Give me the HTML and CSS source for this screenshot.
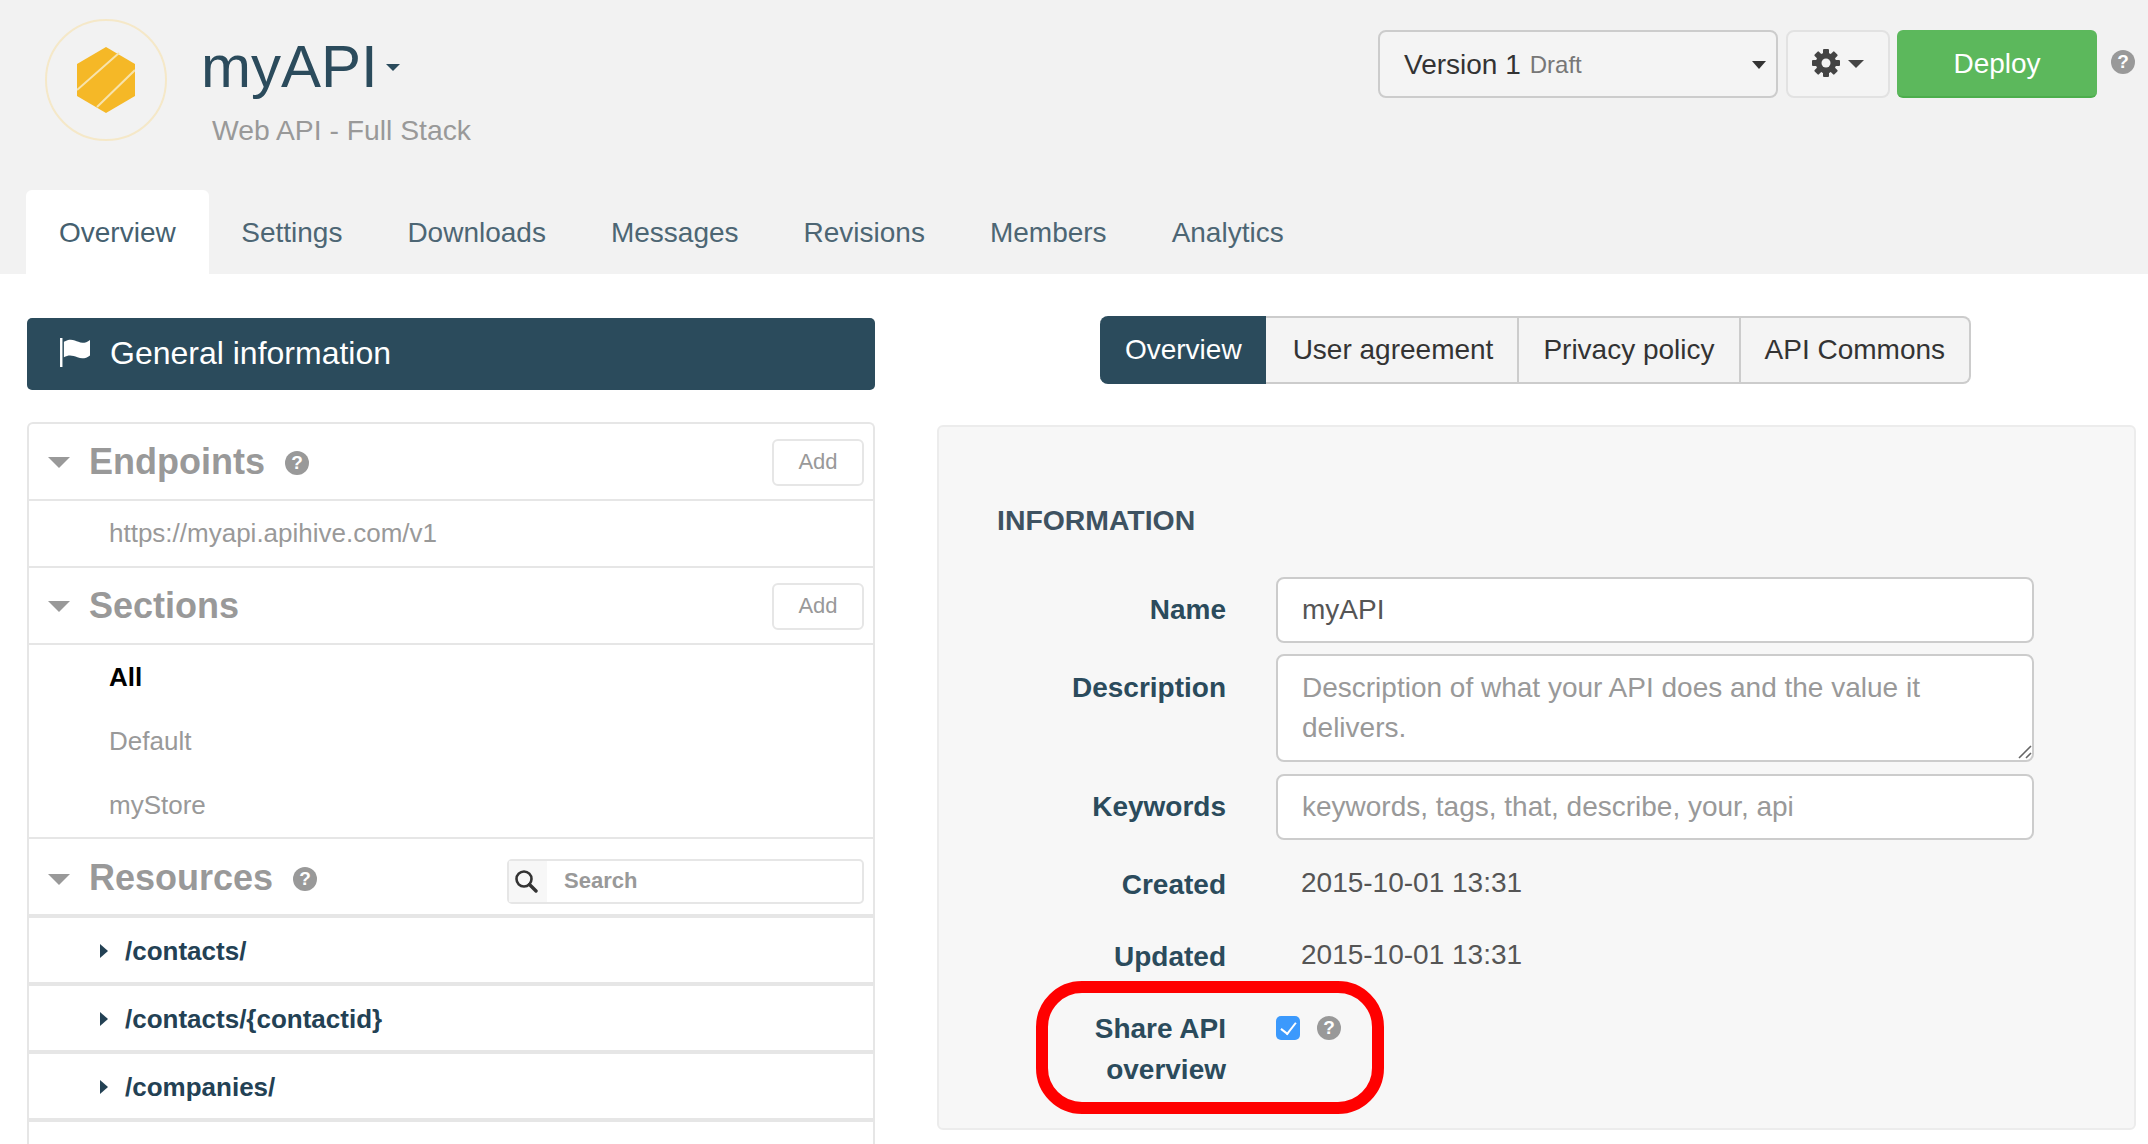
FILE: index.html
```html
<!DOCTYPE html>
<html lang="en">
<head>
<meta charset="utf-8">
<title>myAPI</title>
<link rel="stylesheet" href="styles.css">
</head>
<body>
<header class="header">
  <div class="top">
    <div class="logo">
      <svg class="hex" viewBox="0 0 58 66">
        <polygon points="29,0 58,17 58,49 29,66 0,49 0,17" fill="#f5b827"/>
        <path d="M0 43 L42 6 M20 60 L58 23" stroke="#f7e3ac" stroke-width="2" fill="none"/>
      </svg>
    </div>
    <div class="brand">
      <div class="title-line"><span class="title">myAPI</span><span class="caret title-caret"></span></div>
      <div class="subtitle">Web API - Full Stack</div>
    </div>
    <div class="actions">
      <div class="version"><span>Version 1</span><span class="draft">Draft</span><span class="caret version-caret"></span></div>
      <div class="gear-btn">
        <svg class="gear" viewBox="0 0 28 28">
          <g fill="#444">
            <rect x="11" y="0" width="6" height="28" rx="1"/>
            <rect x="11" y="0" width="6" height="28" rx="1" transform="rotate(45 14 14)"/>
            <rect x="11" y="0" width="6" height="28" rx="1" transform="rotate(90 14 14)"/>
            <rect x="11" y="0" width="6" height="28" rx="1" transform="rotate(135 14 14)"/>
          </g>
          <circle cx="14" cy="14" r="7.5" fill="none" stroke="#444" stroke-width="5.5"/>
          <circle cx="14" cy="14" r="4.5" fill="#f2f2f2"/>
        </svg>
        <span class="caret gear-caret"></span>
      </div>
      <div class="deploy">Deploy</div>
      <span class="help help-top">?</span>
    </div>
  </div>
  <nav class="tabs">
    <a class="tab active">Overview</a>
    <a class="tab">Settings</a>
    <a class="tab">Downloads</a>
    <a class="tab">Messages</a>
    <a class="tab">Revisions</a>
    <a class="tab">Members</a>
    <a class="tab">Analytics</a>
  </nav>
</header>

<main class="main">
  <section class="left">
    <div class="bar">
      <svg class="flag" viewBox="0 0 32 30">
        <rect x="0" y="0" width="2.5" height="30" fill="#fff"/>
        <path d="M4 4 C10 0 15 2 19 4 C23 6 27 5 31 2 L31 18 C27 21 23 22 18 20 C13 18 9 17 4 20 Z" fill="#fff"/>
      </svg>
      <span>General information</span>
    </div>
    <div class="tree">
      <div class="tree-head">
        <span class="tri"></span><h2>Endpoints</h2><span class="help help-head">?</span>
        <span class="add">Add</span>
      </div>
      <div class="endpoint">https://myapi.apihive.com/v1</div>
      <div class="tree-head">
        <span class="tri"></span><h2>Sections</h2>
        <span class="add">Add</span>
      </div>
      <ul class="sections">
        <li class="current">All</li>
        <li>Default</li>
        <li>myStore</li>
      </ul>
      <div class="tree-head res-head">
        <span class="tri"></span><h2>Resources</h2><span class="help help-head">?</span>
        <div class="search">
          <span class="search-icon">
            <svg viewBox="0 0 24 24"><circle cx="10" cy="10" r="7.5" fill="none" stroke="#333" stroke-width="2.6"/><path d="M15.5 15.5 L22 22" stroke="#333" stroke-width="3.4" stroke-linecap="round"/></svg>
          </span>
          <span class="search-text">Search</span>
        </div>
      </div>
      <div class="res"><span class="res-arrow"></span>/contacts/</div>
      <div class="res"><span class="res-arrow"></span>/contacts/{contactid}</div>
      <div class="res"><span class="res-arrow"></span>/companies/</div>
      <div class="res res-empty"></div>
    </div>
  </section>

  <section class="right">
    <div class="subtabs">
      <a class="subtab on">Overview</a>
      <a class="subtab second">User agreement</a>
      <a class="subtab">Privacy policy</a>
      <a class="subtab">API Commons</a>
    </div>
    <div class="panel">
      <h3>INFORMATION</h3>
      <div class="row row-name">
        <label class="lbl lbl-mid">Name</label>
        <input class="field" type="text" value="myAPI">
      </div>
      <div class="row row-desc">
        <label class="lbl lbl-desc">Description</label>
        <textarea class="field area" placeholder="Description of what your API does and the value it delivers."></textarea>
        <svg class="grip" viewBox="0 0 14 14"><path d="M1 13 L13 1 M8 13 L13 8" stroke="#666" stroke-width="1.6" fill="none"/></svg>
      </div>
      <div class="row row-key">
        <label class="lbl lbl-mid">Keywords</label>
        <input class="field" type="text" placeholder="keywords, tags, that, describe, your, api">
      </div>
      <div class="row row-created">
        <span class="lbl lbl-text">Created</span>
        <span class="val">2015-10-01 13:31</span>
      </div>
      <div class="row row-updated">
        <span class="lbl lbl-text">Updated</span>
        <span class="val">2015-10-01 13:31</span>
      </div>
      <div class="row row-share">
        <span class="lbl lbl-text">Share API<br>overview</span>
        <div class="share-ctl">
          <input class="check" type="checkbox" checked>
          <span class="help help-share">?</span>
        </div>
        <div class="ring"></div>
      </div>
    </div>
  </section>
</main>
</body>
</html>
```

FILE: styles.css
```css
* { box-sizing: border-box; }
html, body { margin: 0; height: 1144px; overflow: hidden; background: #fff; }
body { font-family: "Liberation Sans", Arial, sans-serif; font-size: 28px; color: #555; }

/* header */
.header { height: 274px; background: #f2f2f2; display: flex; flex-direction: column; }
.top { height: 190px; display: flex; align-items: flex-start; padding-left: 45px; }
.logo { width: 122px; height: 122px; margin-top: 19px; border: 2px solid #f5e8c8; border-radius: 50%; display: flex; align-items: center; justify-content: center; flex: none; }
.hex { width: 58px; height: 66px; }
.brand { margin-left: 34px; }
.title-line { margin-top: 31px; height: 72px; display: flex; align-items: center; }
.title { font-size: 60px; line-height: 72px; color: #2b4b5c; }
.caret { display: inline-block; width: 0; height: 0; border-left: 7px solid transparent; border-right: 7px solid transparent; border-top: 7px solid #2b4b5c; }
.title-caret { margin-left: 8px; margin-top: 1px; }
.subtitle { margin-top: 9px; margin-left: 11px; line-height: 36px; font-size: 28.3px; color: #999; }
.actions { margin-left: auto; margin-top: 30px; display: flex; align-items: flex-start; padding-right: 13px; }
.version { width: 400px; height: 68px; background: #f4f4f4; border: 2px solid #ccc; border-radius: 8px; padding: 2px 0 0 24px; display: flex; align-items: center; color: #333; }
.draft { font-size: 24px; color: #777; margin-left: 9px; }
.version-caret { margin-left: auto; margin-right: 10px; border-top-color: #333; border-top-width: 8px; }
.gear-btn { width: 104px; height: 68px; margin-left: 8px; background: #f4f4f4; border: 2px solid #e2e2e2; border-radius: 8px; display: flex; align-items: center; padding-left: 24px; }
.gear { width: 28px; height: 28px; margin-top: -3px; }
.gear-caret { margin-left: 8px; border-left-width: 8px; border-right-width: 8px; border-top: 8px solid #444; }
.deploy { width: 200px; height: 68px; margin-left: 7px; padding-top: 2px; background: #5cb85c; border-bottom: 2px solid #4cae4c; border-radius: 6px; color: #fff; display: flex; align-items: center; justify-content: center; }
.help { display: inline-flex; align-items: center; justify-content: center; border-radius: 50%; background: #999; color: #fff; font-weight: 700; flex: none; }
.help-top { width: 24px; height: 24px; font-size: 19px; margin-left: 14px; margin-top: 20px; }

.tabs { height: 84px; display: flex; padding-left: 26px; }
.tab { padding: 1px 32.5px 0; line-height: 84px; color: #4d6674; }
.tab.active { background: #fff; border-radius: 6px 6px 0 0; padding: 1px 33px 0; color: #45606f; }

/* layout */
.main { display: grid; grid-template-columns: 848px 1199px; gap: 62px; padding: 42px 12px 0 27px; }

/* left */
.left { padding-top: 2px; }
.bar { height: 72px; background: #2b4b5c; border-radius: 5px; color: #fff; font-size: 32px; display: flex; align-items: center; padding: 0 0 1px 33px; }
.flag { width: 31px; height: 29px; margin-right: 19px; margin-top: -2px; }
.tree { margin-top: 32px; border: 2px solid #e6e6e6; border-bottom: 0; border-radius: 6px 6px 0 0; }
.tree-head { height: 77px; display: flex; align-items: center; padding: 0 9px 0 19px; border-bottom: 2px solid #e6e6e6; }
.tree-head h2 { margin: 0 0 0 19px; font-size: 36px; font-weight: 700; color: #999; }
.tri { width: 0; height: 0; border-left: 11px solid transparent; border-right: 11px solid transparent; border-top: 11px solid #999; margin-top: 2px; }
.help-head { width: 24px; height: 24px; font-size: 19px; margin-left: 20px; margin-top: 2px; }
.add { margin-left: auto; margin-top: 1px; width: 92px; height: 47px; border: 2px solid #e6e6e6; border-radius: 6px; color: #999; font-size: 22px; display: flex; align-items: center; justify-content: center; }
.endpoint { height: 67px; padding-left: 80px; line-height: 64px; font-size: 26px; color: #999; border-bottom: 2px solid #e6e6e6; }
.sections { list-style: none; margin: 0; padding: 0; border-bottom: 2px solid #e6e6e6; }
.sections li { height: 64px; line-height: 64px; padding-left: 80px; font-size: 26px; color: #999; }
.sections .current { color: #000; font-weight: 700; }
.res-head { height: 79px; padding-top: 3px; border-bottom-width: 4px; }
.search { margin-left: auto; width: 357px; height: 45px; border: 2px solid #e6e6e6; border-radius: 5px; display: flex; align-items: center; margin-top: 6px; }
.search-icon { width: 38px; height: 41px; padding-right: 4px; background: #f7f7f7; display: flex; align-items: center; justify-content: center; flex: none; }
.search-icon svg { width: 24px; height: 24px; flex: none; }
.search-text { margin-left: 17px; font-size: 22px; font-weight: 700; color: #999; }
.res { height: 68px; display: flex; align-items: center; padding: 2px 0 0 71px; border-bottom: 4px solid #e6e6e6; font-size: 26px; font-weight: 700; color: #234154; }
.res-arrow { width: 0; height: 0; border-top: 7px solid transparent; border-bottom: 7px solid transparent; border-left: 8px solid #234154; margin-right: 17px; }
.res-empty { border-bottom: 0; }

/* right */
.subtabs { display: flex; justify-content: center; height: 68px; padding-right: 2px; }
.subtab { height: 68px; line-height: 64px; padding: 0 24px; background: #f4f4f4; border: 2px solid #ccc; border-left-width: 0; color: #333; }
.subtab:last-child { border-radius: 0 8px 8px 0; }
.subtab.on { background: #2b4b5c; border-color: #2b4b5c; color: #fff; border-radius: 8px 0 0 8px; padding: 0 22px 0 25px; }
.subtab.second { padding-left: 27px; }
.panel { margin-top: 41px; height: 705px; background: #f7f7f7; border: 2px solid #ececec; border-radius: 6px; padding-top: 73px; }
.panel h3 { margin: 0 0 37px 58px; font-size: 28.4px; line-height: 40px; font-weight: 700; color: #3e5261; }
.row { display: flex; gap: 50px; }
.lbl { width: 287px; text-align: right; font-weight: 700; color: #2b4b5c; line-height: 40px; flex: none; }
.lbl-mid { line-height: 66px; }
.lbl-desc { line-height: 68px; }
.lbl-text { line-height: 41px; padding-top: 1px; }
.field { width: 758px; height: 66px; padding: 0 24px; border: 2px solid #ccc; border-radius: 8px; background: #fff; font: 28px/40px "Liberation Sans", Arial, sans-serif; color: #555; outline: none; }
.field::placeholder { color: #999; opacity: 1; }
.area { height: 108px; padding-top: 12px; padding-bottom: 12px; line-height: 40px; resize: none; display: block; }
.row-desc { margin-top: 11px; position: relative; }
.grip { position: absolute; left: 1079px; top: 91px; width: 14px; height: 14px; }
.row-key { margin-top: 12px; }
.row-created { margin-top: 23px; }
.row-updated { margin-top: 30px; }
.row-share { margin-top: 30px; position: relative; }
.val { margin-left: 25px; color: #555; line-height: 39px; }
.share-ctl { display: flex; align-items: center; gap: 17px; height: 42px; }
.check { appearance: none; width: 24px; height: 24px; margin: 0; background: #3b99fc; border-radius: 5px; position: relative; }
.check::after { content: ""; position: absolute; left: 8px; top: 3px; width: 7px; height: 13px; border: solid #fff; border-width: 0 2px 2px 0; transform: rotate(38deg); }
.help-share { width: 24px; height: 24px; font-size: 19px; }
.ring { position: absolute; left: 97px; top: -26px; width: 348px; height: 133px; border: 12px solid #f00; border-radius: 46px; pointer-events: none; }
```
